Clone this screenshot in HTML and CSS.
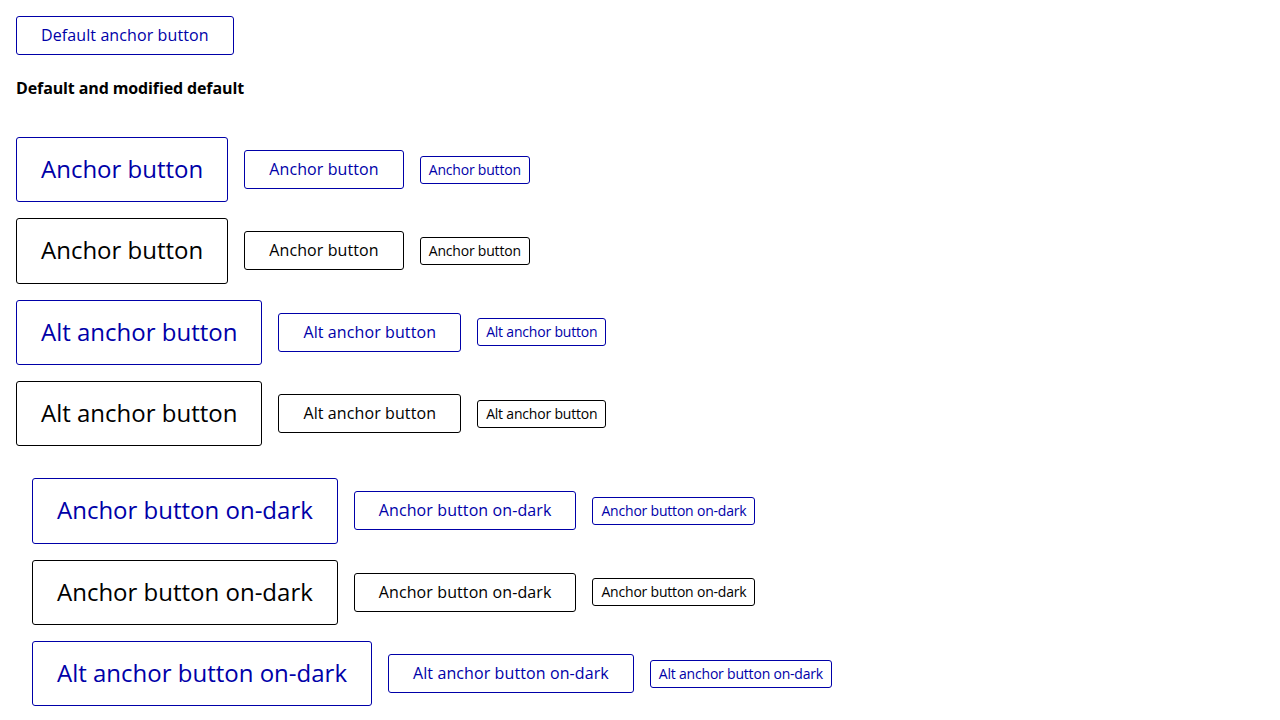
FILE: index.html
```html
<!DOCTYPE html>
<html lang="en">
<head>
<meta charset="utf-8">
<title>Anchor buttons</title>
<link rel="stylesheet" href="styles.css">
</head>
<body>
<div class="top">
  <a class="btn" href="#">Default anchor button</a>
</div>
<h2 class="heading">Default and modified default</h2>
<div class="stack">
  <div class="row">
    <a class="btn btn-lg" href="#">Anchor button</a>
    <a class="btn" href="#">Anchor button</a>
    <a class="btn btn-sm" href="#">Anchor button</a>
  </div>
  <div class="row">
    <a class="btn btn-lg btn-mono" href="#">Anchor button</a>
    <a class="btn btn-mono" href="#">Anchor button</a>
    <a class="btn btn-sm btn-mono" href="#">Anchor button</a>
  </div>
  <div class="row">
    <a class="btn btn-lg" href="#">Alt anchor button</a>
    <a class="btn" href="#">Alt anchor button</a>
    <a class="btn btn-sm" href="#">Alt anchor button</a>
  </div>
  <div class="row">
    <a class="btn btn-lg btn-mono" href="#">Alt anchor button</a>
    <a class="btn btn-mono" href="#">Alt anchor button</a>
    <a class="btn btn-sm btn-mono" href="#">Alt anchor button</a>
  </div>
  <div class="dark stack">
    <div class="row">
      <a class="btn btn-lg" href="#">Anchor button on-dark</a>
      <a class="btn" href="#">Anchor button on-dark</a>
      <a class="btn btn-sm" href="#">Anchor button on-dark</a>
    </div>
    <div class="row">
      <a class="btn btn-lg btn-mono" href="#">Anchor button on-dark</a>
      <a class="btn btn-mono" href="#">Anchor button on-dark</a>
      <a class="btn btn-sm btn-mono" href="#">Anchor button on-dark</a>
    </div>
    <div class="row">
      <a class="btn btn-lg" href="#">Alt anchor button on-dark</a>
      <a class="btn" href="#">Alt anchor button on-dark</a>
      <a class="btn btn-sm" href="#">Alt anchor button on-dark</a>
    </div>
  </div>
</div>
</body>
</html>
```
FILE: styles.css
```css
html, body {
  margin: 0;
  background: #ffffff;
}
body {
  padding: 16px;
  font-family: "Open Sans", "Liberation Sans", sans-serif;
  color: #000;
}
.top {
  display: flex;
}
.heading {
  margin: 21px 0 37px;
  font-size: 16px;
  line-height: 24px;
  font-weight: 700;
  letter-spacing: -0.12px;
}
.stack {
  display: flex;
  flex-direction: column;
  gap: 16px;
}
.row {
  display: flex;
  align-items: center;
  gap: 16px;
}
.dark {
  padding: 16px;
}
.btn {
  display: inline-block;
  box-sizing: border-box;
  border: 1px solid #0000a8;
  border-radius: 3px;
  color: #0000a8;
  text-decoration: none;
  font-size: 16px;
  line-height: 25px;
  padding: 6px 24px;
  letter-spacing: 0.1px;
  white-space: nowrap;
}
.btn-lg {
  font-size: 24px;
  line-height: 33.33px;
  padding: 14px 24px 16px;
  letter-spacing: 0;
}
.btn-sm {
  font-size: 14px;
  line-height: 20px;
  padding: 3px 8px;
  letter-spacing: -0.2px;
}
.btn-mono {
  color: #000;
  border-color: #000;
}
```
